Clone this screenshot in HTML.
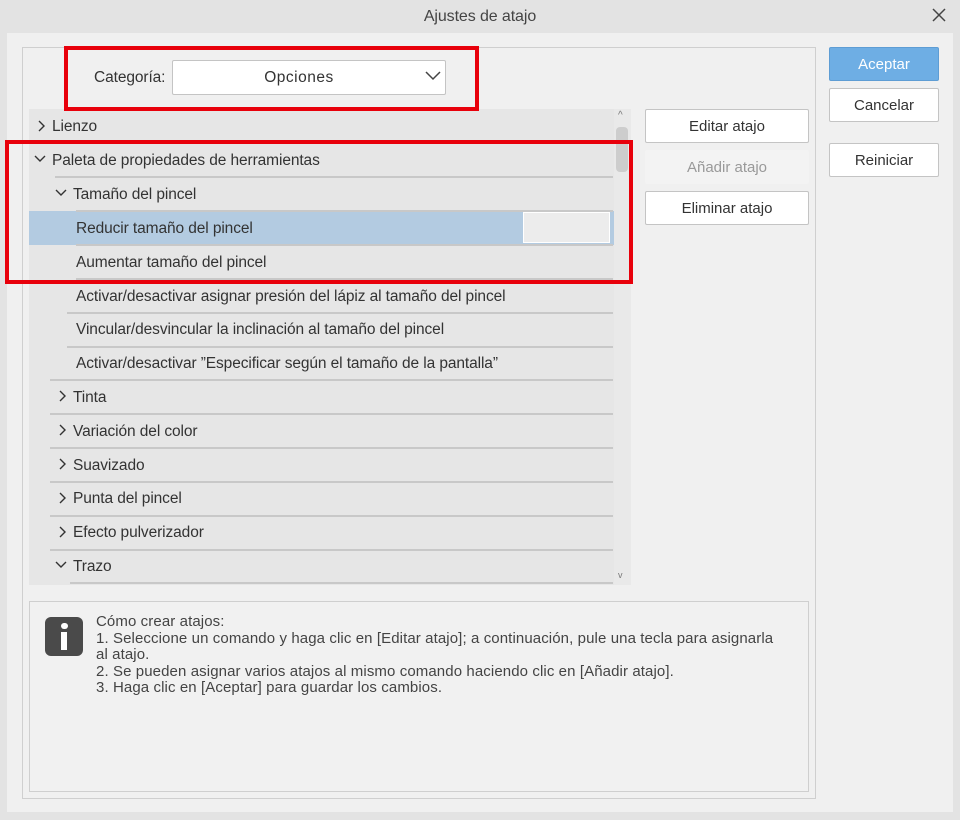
<!DOCTYPE html>
<html><head><meta charset="utf-8"><style>
*{margin:0;padding:0;box-sizing:border-box}
body{width:960px;height:820px;background:#e3e3e3;font-family:"Liberation Sans",sans-serif;color:#333;position:relative;overflow:hidden}
.a{position:absolute}
.t{font-size:15.5px;white-space:nowrap;letter-spacing:-0.1px}
.btn{position:absolute;background:#fff;border:1px solid #c4c4c4;border-radius:2px;font-size:15px;text-align:center;color:#333}
.row{position:absolute;left:29px;width:585px;height:34px}
.line{position:absolute;height:2px;background:#c8c8c8}
</style></head><body>
<div class="a t" style="left:0;top:8px;width:960px;text-align:center;font-size:16px;color:#444">Ajustes de atajo</div>
<svg class="a" style="left:932px;top:8px" width="14" height="14"><path d="M1 1L13 13M13 1L1 13" stroke="#444" stroke-width="1.5"/></svg>
<div class="a" style="left:7px;top:33px;width:946px;height:779px;background:#f0f0f0"></div>
<div class="a" style="left:22px;top:47px;width:794px;height:752px;border:1px solid #cfcfcf"></div>

<div class="a t" style="left:94px;top:69px">Categoría:</div>
<div class="a" style="left:172px;top:60px;width:274px;height:35px;background:#fff;border:1px solid #c4c4c4;border-radius:2px"></div>
<div class="a t" style="left:172px;top:69px;width:254px;text-align:center;letter-spacing:0.5px">Opciones</div>
<svg class="a" style="left:425px;top:71px" width="16" height="10"><path d="M1 1L8 8L15 1" stroke="#444" stroke-width="1.5" fill="none"/></svg>

<div class="a" style="left:29px;top:109px;width:602px;height:476px;background:#e6e6e6"></div>
<div class="a" style="left:614px;top:109px;width:17px;height:476px;background:#e9e9e9"></div>
<div class="a" style="left:616px;top:127px;width:12px;height:45px;background:#cdcdcd;border-radius:4px"></div>
<div class="a" style="left:618px;top:110px;font-size:10px;color:#777">^</div>
<div class="a" style="left:618px;top:570px;font-size:9px;color:#777">v</div>

<div class="row" style="top:211px;background:#b3cbe1"></div>
<div class="a" style="left:523px;top:212px;width:87px;height:31px;background:#ececec;border:1px solid #fff"></div>

<div class="line" style="left:55px;top:176px;width:558px"></div>
<div class="line" style="left:76px;top:210px;width:537px"></div>
<div class="line" style="left:76px;top:244px;width:537px"></div>
<div class="line" style="left:76px;top:278px;width:537px"></div>
<div class="line" style="left:67px;top:312px;width:546px"></div>
<div class="line" style="left:67px;top:346px;width:546px"></div>
<div class="line" style="left:50px;top:379px;width:563px"></div>
<div class="line" style="left:50px;top:413px;width:563px"></div>
<div class="line" style="left:50px;top:447px;width:563px"></div>
<div class="line" style="left:50px;top:481px;width:563px"></div>
<div class="line" style="left:50px;top:515px;width:563px"></div>
<div class="line" style="left:50px;top:549px;width:563px"></div>
<div class="line" style="left:70px;top:582px;width:543px"></div>

<svg class="a" style="left:0;top:0" width="960" height="820" fill="none" stroke="#333" stroke-width="1.4">
<path d="M39 121L44 126L39 131"/>
<path d="M35 156L40 161L45 156"/>
<path d="M56 190L61 195L66 190"/>
<path d="M60 391L65 396L60 401"/>
<path d="M60 425L65 430L60 435"/>
<path d="M60 459L65 464L60 469"/>
<path d="M60 493L65 498L60 503"/>
<path d="M60 527L65 532L60 537"/>
<path d="M56 562L61 567L66 562"/>
</svg>
<div class="a t" style="left:52px;top:118px">Lienzo</div>
<div class="a t" style="left:52px;top:152px">Paleta de propiedades de herramientas</div>
<div class="a t" style="left:73px;top:186px">Tamaño del pincel</div>
<div class="a t" style="left:76px;top:220px">Reducir tamaño del pincel</div>
<div class="a t" style="left:76px;top:254px">Aumentar tamaño del pincel</div>
<div class="a t" style="left:76px;top:288px">Activar/desactivar asignar presión del lápiz al tamaño del pincel</div>
<div class="a t" style="left:76px;top:321px">Vincular/desvincular la inclinación al tamaño del pincel</div>
<div class="a t" style="left:76px;top:355px">Activar/desactivar ”Especificar según el tamaño de la pantalla”</div>
<div class="a t" style="left:73px;top:389px">Tinta</div>
<div class="a t" style="left:73px;top:423px">Variación del color</div>
<div class="a t" style="left:73px;top:457px">Suavizado</div>
<div class="a t" style="left:73px;top:490px">Punta del pincel</div>
<div class="a t" style="left:73px;top:524px">Efecto pulverizador</div>
<div class="a t" style="left:73px;top:558px">Trazo</div>

<div class="btn" style="left:645px;top:109px;width:164px;height:34px;line-height:33px">Editar atajo</div>
<div class="btn" style="left:645px;top:150px;width:164px;height:34px;line-height:33px;background:#f3f3f3;border-color:#f3f3f3;color:#999">Añadir atajo</div>
<div class="btn" style="left:645px;top:191px;width:164px;height:34px;line-height:33px">Eliminar atajo</div>
<div class="btn" style="left:829px;top:47px;width:110px;height:34px;line-height:33px;background:#6eaee4;border-color:#5e9dd4;color:#fff">Aceptar</div>
<div class="btn" style="left:829px;top:88px;width:110px;height:34px;line-height:33px">Cancelar</div>
<div class="btn" style="left:829px;top:143px;width:110px;height:34px;line-height:33px">Reiniciar</div>

<div class="a" style="left:29px;top:601px;width:780px;height:191px;border:1px solid #cfcfcf;background:#f1f1f1"></div>
<div class="a" style="left:45px;top:617px;width:38px;height:39px;background:#4a4a4a;border-radius:6px"></div>
<div class="a" style="left:61px;top:623px;width:7px;height:6px;background:#fff;border-radius:3px"></div>
<div class="a" style="left:61px;top:632px;width:6px;height:18px;background:#fff"></div>
<div class="a" style="left:96px;top:614px;font-size:15px;line-height:16.5px;color:#444;letter-spacing:0.1px;white-space:nowrap">Cómo crear atajos:<br>1. Seleccione un comando y haga clic en [Editar atajo]; a continuación, pule una tecla para asignarla<br>al atajo.<br>2. Se pueden asignar varios atajos al mismo comando haciendo clic en [Añadir atajo].<br>3. Haga clic en [Aceptar] para guardar los cambios.</div>

<div class="a" style="left:64px;top:46px;width:415px;height:65px;border:4px solid #e8000b"></div>
<div class="a" style="left:5px;top:140px;width:628px;height:144px;border:4px solid #e8000b"></div>
</body></html>
